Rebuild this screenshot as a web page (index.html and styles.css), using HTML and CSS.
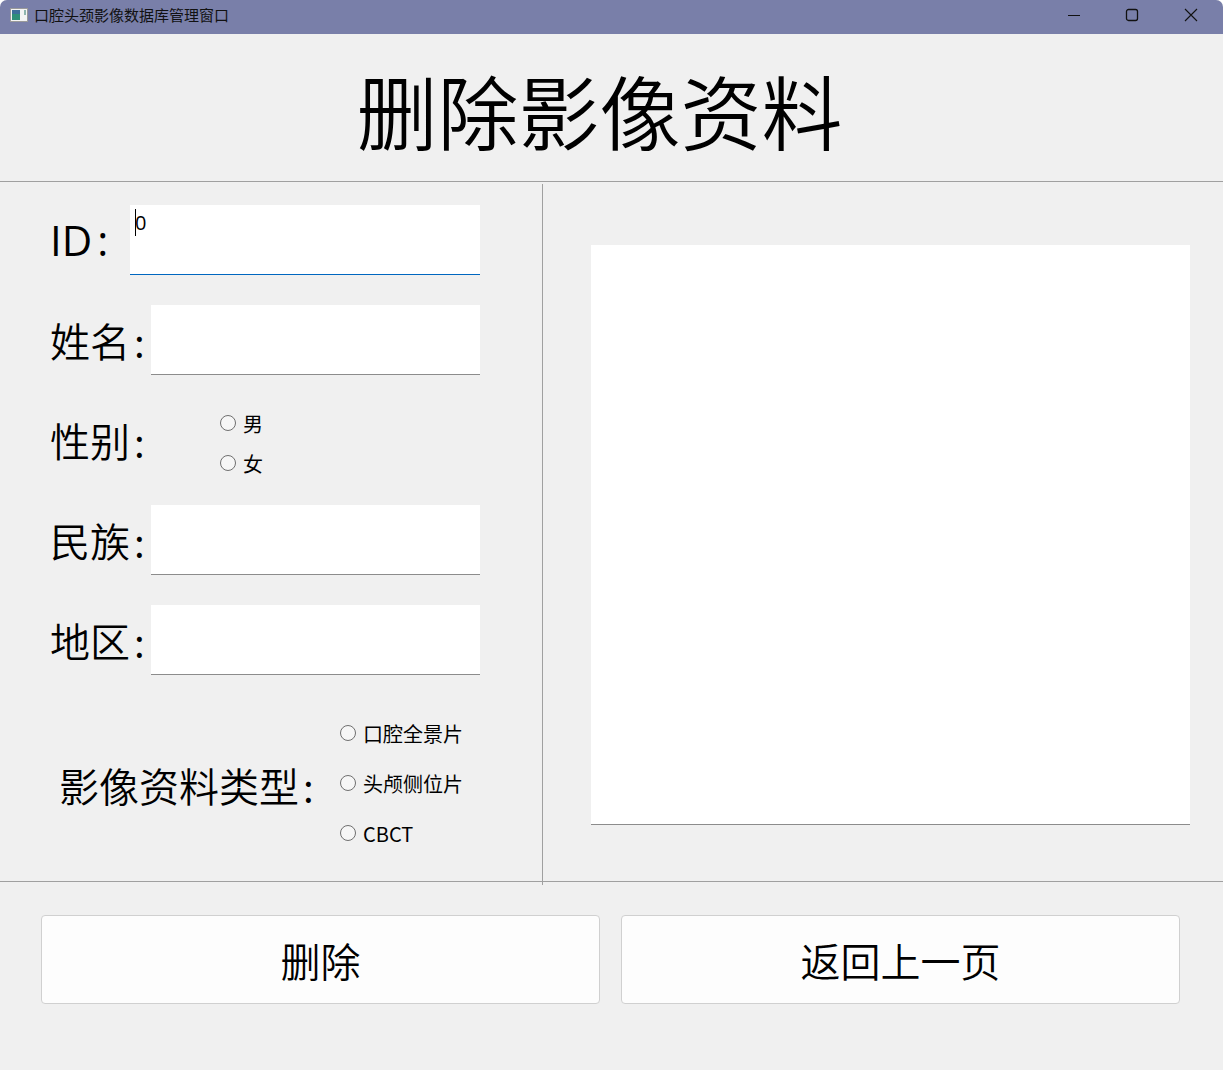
FILE: index.html
```html
<!DOCTYPE html>
<html lang="zh">
<head>
<meta charset="utf-8">
<title>口腔头颈影像数据库管理窗口</title>
<link rel="stylesheet" href="styles.css">
</head>
<body>
<div class="window">
  <header class="titlebar">
    <svg class="app-icon" width="18" height="14" viewBox="0 0 18 14">
      <rect x="0.5" y="0.5" width="17" height="13" fill="#f4f4f4" stroke="#9a9a9a"/>
      <rect x="2" y="2" width="8" height="10" fill="#2f8f78"/>
      <rect x="2" y="2" width="8" height="4" fill="#3d6f9a"/>
      <rect x="14" y="2" width="2" height="5" fill="#8fb5ae"/>
    </svg>
    <span class="title-text">口腔头颈影像数据库管理窗口</span>
    <div class="controls">
      <span class="control"><svg width="14" height="14" viewBox="0 0 14 14"><path d="M1 7.5H13" stroke="#111" fill="none"/></svg></span>
      <span class="control"><svg width="14" height="14" viewBox="0 0 14 14"><rect x="1.5" y="1.5" width="11" height="11" rx="2" stroke="#111" stroke-width="1.3" fill="none"/></svg></span>
      <span class="control"><svg width="14" height="14" viewBox="0 0 14 14"><path d="M1 1L13 13M13 1L1 13" stroke="#111" stroke-width="1.1" fill="none"/></svg></span>
    </div>
  </header>
  <h1 class="page-title">删除影像资料</h1>
  <main class="main">
    <section class="form">
      <div class="row">
        <label class="label label-id">ID<span class="colon">:</span></label>
        <div class="input input-id"><span class="caret"></span><span class="value">0</span></div>
      </div>
      <div class="row">
        <label class="label">姓名<span class="colon">:</span></label>
        <div class="input"></div>
      </div>
      <div class="row row-gender">
        <label class="label">性别<span class="colon">:</span></label>
        <div class="radios radios-gender">
          <div class="radio"><span class="dot"></span>男</div>
          <div class="radio"><span class="dot"></span>女</div>
        </div>
      </div>
      <div class="row">
        <label class="label">民族<span class="colon">:</span></label>
        <div class="input"></div>
      </div>
      <div class="row">
        <label class="label">地区<span class="colon">:</span></label>
        <div class="input"></div>
      </div>
      <div class="row-type">
        <label class="label label-type">影像资料类型<span class="colon">:</span></label>
        <div class="radios radios-type">
          <div class="radio"><span class="dot"></span>口腔全景片</div>
          <div class="radio"><span class="dot"></span>头颅侧位片</div>
          <div class="radio"><span class="dot"></span>CBCT</div>
        </div>
      </div>
    </section>
    <div class="divider"></div>
    <section class="preview-wrap">
      <div class="preview"></div>
    </section>
  </main>
  <footer class="footer">
    <button class="btn">删除</button>
    <button class="btn">返回上一页</button>
  </footer>
</div>
</body>
</html>
```
FILE: styles.css
```css
* { box-sizing: border-box; }
html, body { margin: 0; padding: 0; background: #fff; }
body { width: 1223px; height: 1070px; overflow: hidden; }
.window {
  width: 1223px;
  height: 1070px;
  background: #f0f0f0;
  border-radius: 7px 7px 0 0;
  overflow: hidden;
  font-family: "Noto Sans CJK SC", "Open Sans", sans-serif;
  font-weight: 350;
  color: #000;
  display: flex;
  flex-direction: column;
}
.titlebar {
  height: 34px;
  background: #797fa9;
  display: flex;
  align-items: center;
  padding-left: 10px;
  padding-bottom: 4px;
  flex: none;
}
.app-icon { flex: none; }
.title-text {
  margin-left: 6px;
  font-size: 15px;
  font-weight: 400;
  line-height: 20px;
  color: #111;
  white-space: nowrap;
}
.controls {
  margin-left: auto;
  display: flex;
  padding-right: 3px;
}
.control {
  width: 58.5px;
  height: 30px;
  display: flex;
  align-items: center;
  justify-content: center;
}
.page-title {
  flex: none;
  height: 148px;
  margin: 0;
  border-bottom: 1px solid #a0a0a0;
  text-align: center;
  font-size: 81px;
  font-weight: 350;
  line-height: 150px;
  padding-right: 24px;
  letter-spacing: 0;
}
.main {
  flex: none;
  height: 700px;
  display: flex;
  border-bottom: 1px solid #a0a0a0;
}
.form {
  width: 542px;
  flex: none;
  padding: 23px 0 0 50px;
}
.divider {
  width: 1px;
  flex: none;
  background: #a0a0a0;
  margin: 2px 0 -4px;
  position: relative;
}
.row {
  height: 70px;
  width: 430px;
  margin-bottom: 30px;
  display: flex;
  align-items: center;
}
.label {
  flex: none;
  width: 101px;
  font-size: 40px;
  line-height: 70px;
  white-space: nowrap;
}
.colon { margin-left: 4px; }
.label-id {
  width: 80px;
  font-family: "Open Sans", sans-serif;
  font-size: 42px;
  font-weight: 400;
}
.label-id .colon { margin-left: 5px; }
.input {
  flex: 1;
  height: 70px;
  background: #fff;
  border-bottom: 1px solid #8c8c8c;
  position: relative;
}
.input-id {
  border-bottom-color: #0067c0;
  font-size: 20px;
  line-height: 28px;
  padding: 4px 0 0 5px;
  display: flex;
  align-items: flex-start;
}
.caret {
  width: 1px;
  height: 27px;
  background: #000;
  flex: none;
}
.value { font-family: "Open Sans", sans-serif; font-weight: 400; margin-left: -1px; line-height: 28px; }
.radios { display: flex; flex-direction: column; }
.radio {
  display: flex;
  align-items: center;
  font-size: 20px;
  font-weight: 400;
  white-space: nowrap;
}
.dot {
  width: 16px;
  height: 16px;
  border: 1px solid #6f6f6f;
  border-radius: 50%;
  margin-right: 7px;
  flex: none;
  background: #f6f6f6;
}
.radios-gender {
  margin-left: 69px;
  margin-top: 6px;
  gap: 10px;
}
.radios-gender .radio { height: 30px; }
.row-type {
  display: flex;
  width: 430px;
  margin-top: 24px;
  height: 150px;
  align-items: center;
}
.label-type {
  width: 290px;
  padding-left: 9px;
  margin-top: 10px;
}
.radios-type { margin-top: 6px; }
.radios-type .radio { height: 50px; }
.preview-wrap {
  flex: 1;
  padding: 63px 32px 0 48px;
}
.preview {
  width: 599px;
  height: 580px;
  background: #fff;
  border-bottom: 1px solid #8c8c8c;
}
.footer {
  flex: 1;
  display: flex;
  gap: 21px;
  padding: 33px 43px 0 41px;
  align-items: flex-start;
}
.btn {
  width: 559px;
  height: 89px;
  background: #fdfdfd;
  border: 1px solid #d0d0d0;
  border-radius: 4px;
  font-family: "Noto Sans CJK SC", sans-serif;
  font-weight: 350;
  font-size: 40px;
  color: #000;
  padding: 0;
}
```
